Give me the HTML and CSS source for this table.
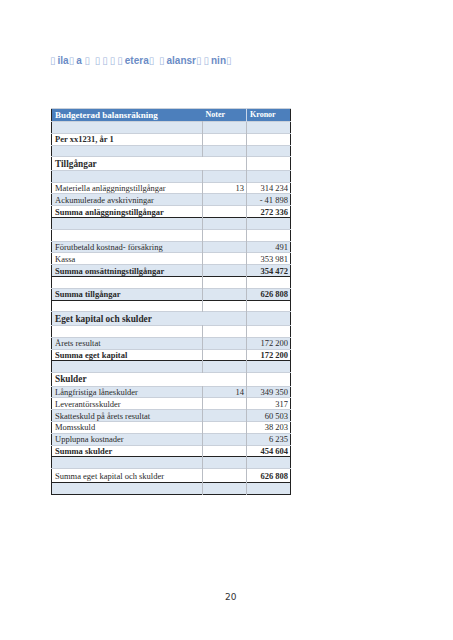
FILE: index.html
```html
<!DOCTYPE html>
<html lang="sv">
<head>
  <meta charset="UTF-8" />
  <meta name="viewport" content="width=device-width, initial-scale=1.0"/>
  <title>Budgeterad balansräkning</title>
  <link rel="stylesheet" href="styles.css">
</head>
<body>

<div class="page">
  <h1 class="title"><span class="tofu">▯</span>ila<span class="tofu">▯</span>a <span class="tofu">▯</span> <span class="tofu">▯▯▯▯</span>etera<span class="tofu">▯</span> <span class="tofu">▯</span>alansr<span class="tofu">▯▯</span>nin<span class="tofu">▯</span></h1>

  <table class="sheet">
    <colgroup>
      <col class="col-label">
      <col class="col-note">
      <col class="col-amount">
    </colgroup>
    <tr class="head">
      <th class="big">Budgeterad balansräkning</th>
      <th>Noter</th>
      <th class="sep">Kronor</th>
    </tr>
    <tr class="alt"><td></td><td></td><td></td></tr>
    <tr class="line"><td class="b">Per xx1231, år 1</td><td></td><td></td></tr>
    <tr class="alt"><td></td><td></td><td></td></tr>
    <tr class="heading line"><td colspan="2">Tillgångar</td><td></td></tr>
    <tr class="alt"><td></td><td></td><td></td></tr>
    <tr><td>Materiella anläggningstillgångar</td><td class="num">13</td><td class="num">314 234</td></tr>
    <tr class="alt"><td>Ackumulerade avskrivningar</td><td></td><td class="num">- 41 898</td></tr>
    <tr class="sum"><td>Summa anläggningstillgångar</td><td></td><td class="num">272 336</td></tr>
    <tr class="alt"><td></td><td></td><td></td></tr>
    <tr><td></td><td></td><td></td></tr>
    <tr class="alt"><td>Förutbetald kostnad- försäkring</td><td></td><td class="num">491</td></tr>
    <tr><td>Kassa</td><td></td><td class="num">353 981</td></tr>
    <tr class="alt sum"><td>Summa omsättningstillgångar</td><td></td><td class="num">354 472</td></tr>
    <tr><td></td><td></td><td></td></tr>
    <tr class="alt sum"><td>Summa tillgångar</td><td></td><td class="num">626 808</td></tr>
    <tr><td></td><td></td><td></td></tr>
    <tr class="alt heading line"><td colspan="2">Eget kapital och skulder</td><td></td></tr>
    <tr><td></td><td></td><td></td></tr>
    <tr class="alt"><td>Årets resultat</td><td></td><td class="num">172 200</td></tr>
    <tr class="sum"><td>Summa eget kapital</td><td></td><td class="num">172 200</td></tr>
    <tr class="alt"><td></td><td></td><td></td></tr>
    <tr class="heading line"><td colspan="2">Skulder</td><td></td></tr>
    <tr class="alt"><td>Långfristiga låneskulder</td><td class="num">14</td><td class="num">349 350</td></tr>
    <tr><td>Leverantörsskulder</td><td></td><td class="num">317</td></tr>
    <tr class="alt"><td>Skatteskuld på årets resultat</td><td></td><td class="num">60 503</td></tr>
    <tr><td>Momsskuld</td><td></td><td class="num">38 203</td></tr>
    <tr class="alt"><td>Upplupna kostnader</td><td></td><td class="num">6 235</td></tr>
    <tr class="sum"><td>Summa skulder</td><td></td><td class="num">454 604</td></tr>
    <tr class="alt"><td></td><td></td><td></td></tr>
    <tr class="total"><td>Summa eget kapital och skulder</td><td></td><td class="num b">626 808</td></tr>
    <tr class="alt"><td></td><td></td><td></td></tr>
  </table>

  <div class="page-num">20</div>
</div>

</body>
</html>
```

FILE: styles.css
```css
body {
  margin: 0;
  padding: 0;
  background: #ffffff;
}
.page {
  width: 453px;
  height: 640px;
  overflow: hidden;
}
.title {
  margin: 0;
  padding: 54px 0 0 50px;
  font-family: "Liberation Sans", Arial, sans-serif;
  font-size: 10px;
  line-height: 14px;
  font-weight: bold;
  color: #6b8cc6;
}
.tofu {
  font-family: "DejaVu Sans", sans-serif;
  font-weight: normal;
  letter-spacing: 2px;
  color: #a3b7dd;
}
.sheet {
  margin: 40px 0 0 51px;
  width: 240px;
  border-collapse: collapse;
  border: 1px solid #222;
  font-family: "Liberation Serif", "Times New Roman", serif;
  font-size: 8.5px;
  color: #2a2a2a;
  table-layout: fixed;
}
.col-label { width: 151px; }
.col-note { width: 44px; }
.col-amount { width: 44px; }
.sheet td,
.sheet th {
  padding: 0 2px 0 3px;
  height: 10.8px;
  line-height: 10px;
  white-space: nowrap;
  overflow: hidden;
}
.sheet td + td {
  border-left: 1px solid #b9bdc4;
}
.sheet tr {
  border-top: 1px solid #c9d0da;
}
.head {
  background: #4c7fbc;
  color: #fff;
}
.head th {
  height: 12px;
  text-align: left;
  font-size: 8px;
}
.head th.big {
  font-size: 9px;
}
.head th.sep {
  border-left: 1px solid #c8d6ea;
}
.alt {
  background: #dce6f1;
}
.line {
  border-top: 1px solid #555;
}
.heading td {
  height: 12.5px;
  font-size: 9.3px;
  font-weight: bold;
}
.sum {
  border-top: 1px solid #222;
  border-bottom: 1px solid #222;
  font-weight: bold;
}
.total {
  border-top: 1px solid #222;
  border-bottom: 1px solid #222;
}
.total td {
  height: 13px;
}
.b {
  font-weight: bold;
}
.num {
  text-align: right;
}
.page-num {
  margin-top: 96px;
  padding-left: 225px;
  font-family: "DejaVu Sans", sans-serif;
  font-size: 9px;
  line-height: 12px;
  color: #333;
}
```
